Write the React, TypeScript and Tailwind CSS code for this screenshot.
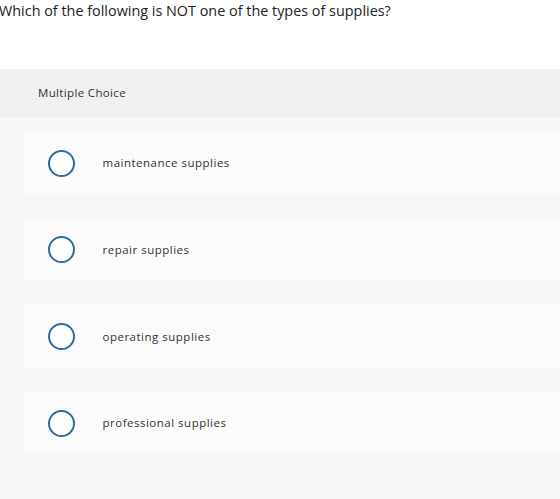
import React from "react";

const options = [
  "maintenance supplies",
  "repair supplies",
  "operating supplies",
  "professional supplies",
];

export default function App() {
  return (
    <div
      className="w-[560px] h-[499px] bg-white overflow-hidden text-[#333]"
      style={{ fontFamily: "'Open Sans', Lato, sans-serif" }}
    >
      <div className="h-[69px] pt-[2px]">
        <p className="text-[14.4px] leading-[18px] text-[#222] -ml-[1px]">
          Which of the following is NOT one of the types of supplies?
        </p>
      </div>
      <div className="h-[48px] bg-[#f0f0f0] flex items-center pl-[38px]">
        <span className="text-[11.5px] tracking-[0.35px] text-[#333]">Multiple Choice</span>
      </div>
      <div className="bg-[#f7f7f7] h-[382px] pt-[15px] pl-[24px] flex flex-col gap-[24.7px]">
        {options.map((o) => (
          <div
            key={o}
            className="h-[62px] bg-[#fbfbfb] flex items-center rounded-l-[2px]"
          >
            <div className="ml-[23.5px] w-[27px] h-[27px] rounded-full border-2 border-[#2e6aa5] bg-white shrink-0" />
            <span className="ml-[28px] text-[11.5px] tracking-[0.5px] text-[#333]">{o}</span>
          </div>
        ))}
      </div>
    </div>
  );
}
